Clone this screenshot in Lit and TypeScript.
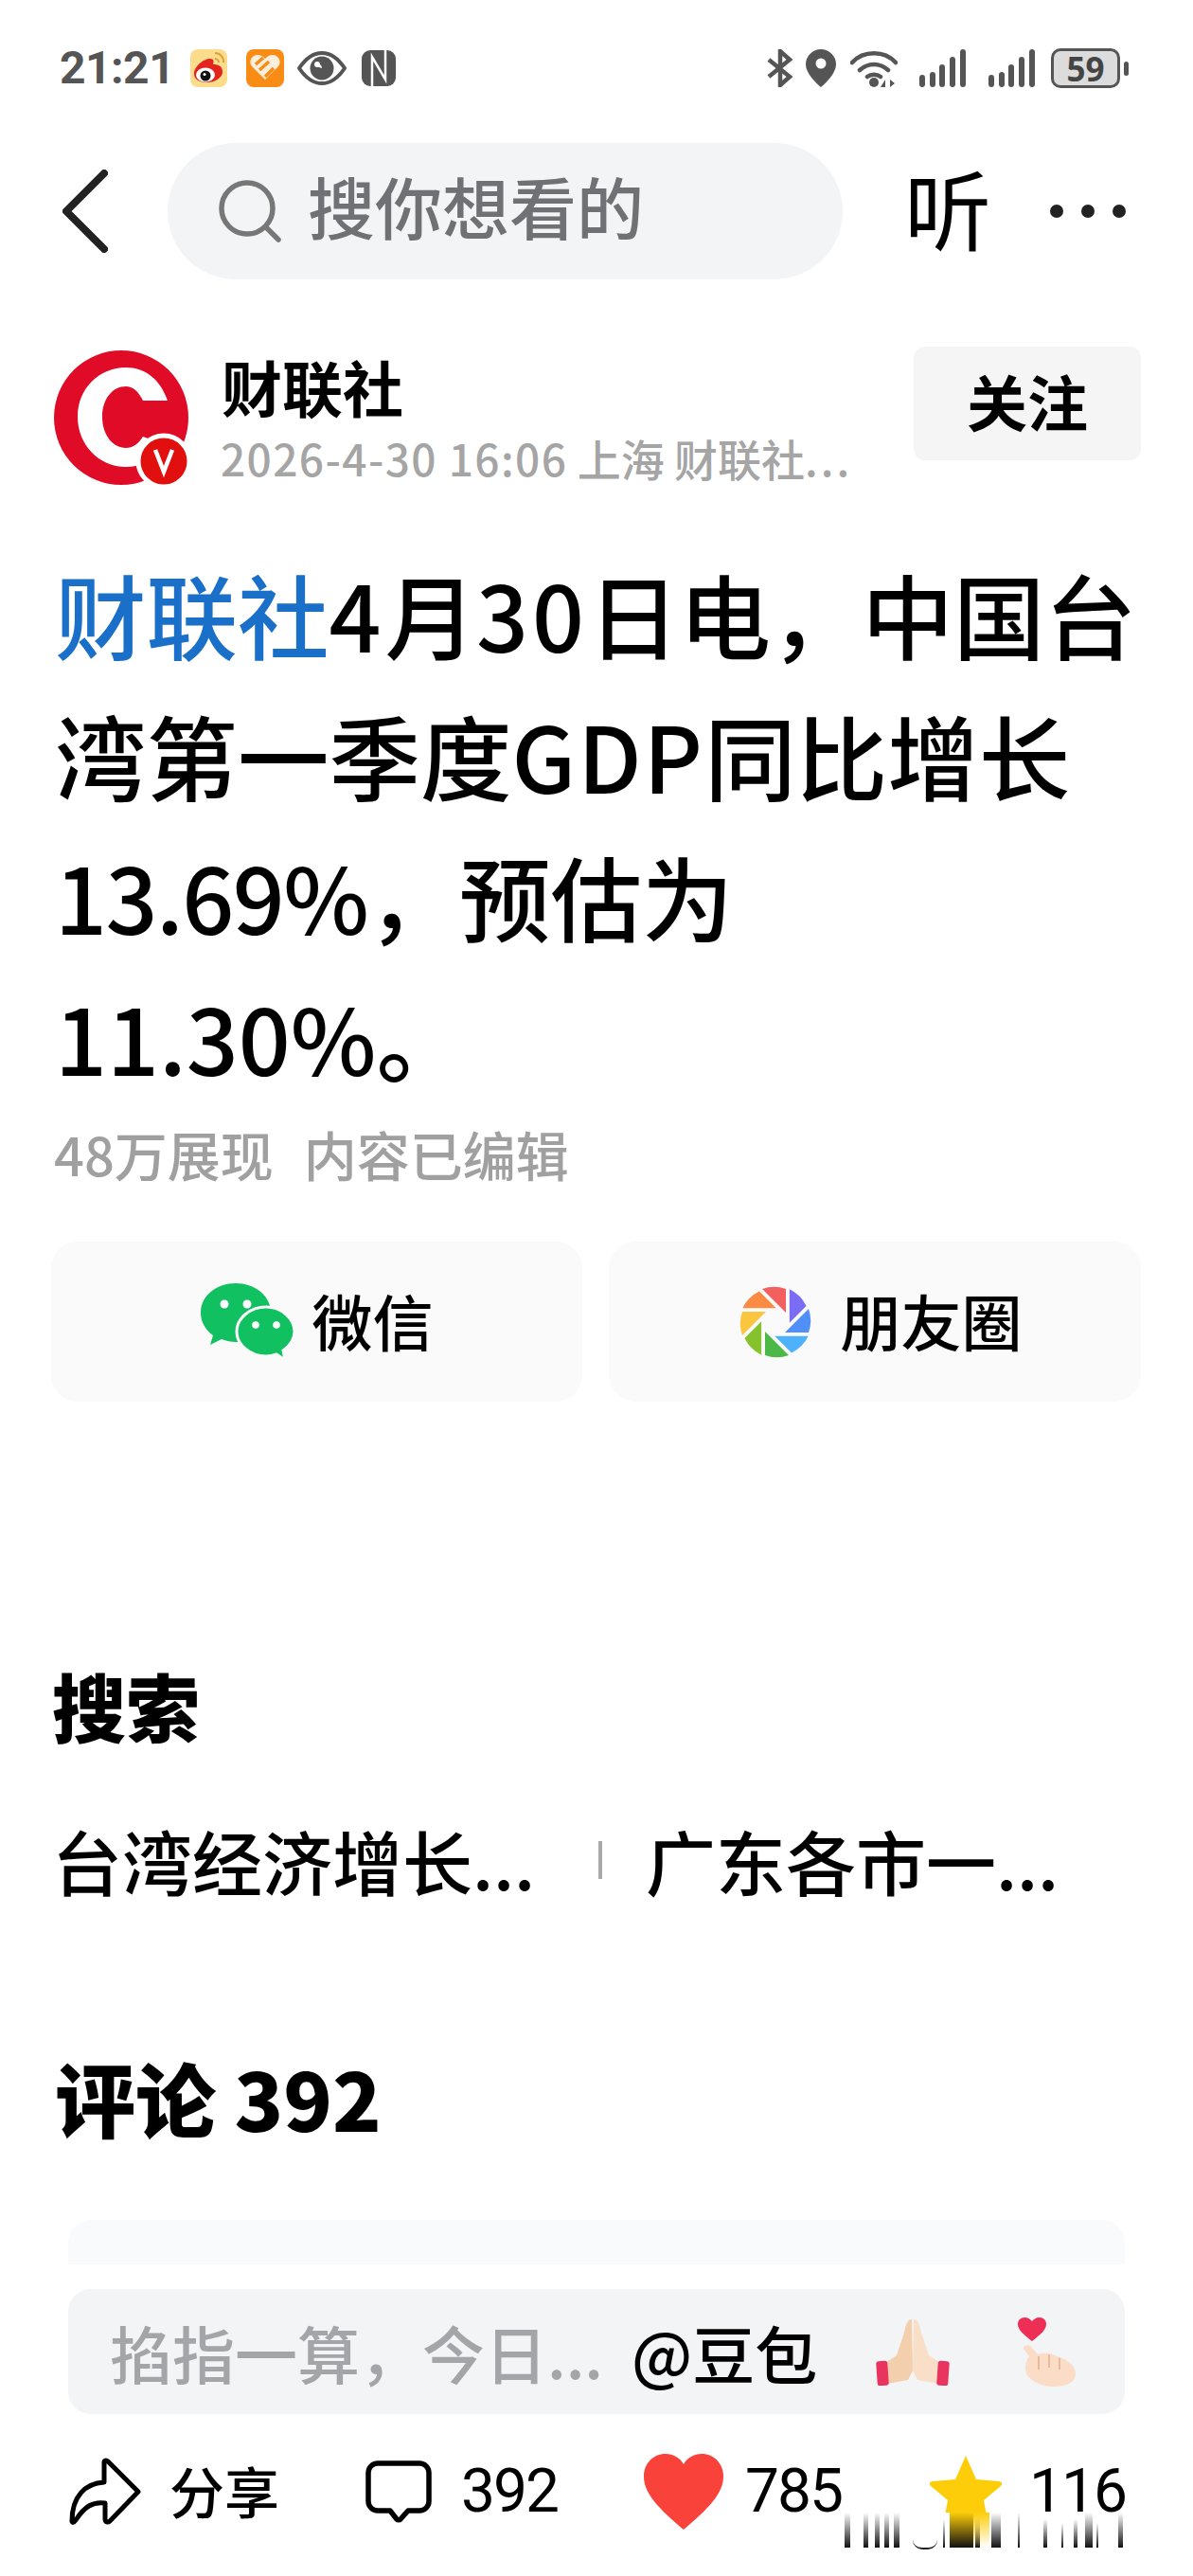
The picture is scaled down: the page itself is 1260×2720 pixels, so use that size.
import { LitElement, html, css, svg } from "lit";
import { customElement } from "lit/decorators.js";

// colours of the Moments shutter blades, clockwise from the top
const BLADES = ["#f2605f", "#7b6cf6", "#4f8ff7", "#4db2fb", "#4cb848", "#86c22e", "#fcc53f", "#fb8a43"];

// smeared strip at the bottom right: [left, width, start of the fade in %]
const BARS: [number, number, number][] = [
  [892, 6, 0], [912, 5, 0], [924, 5, 0], [934, 5, 0], [944, 6, 0],
  [996, 2, 20], [1030, 5, 10], [1047, 10, 0], [1075, 2, 0], [1102, 4, 20],
  [1121, 2, 30], [1134, 4, 20], [1146, 8, 0], [1158, 2, 30], [1181, 5, 0],
];

function blades() {
  return BLADES.map(
    (c, i) => svg`<path transform="rotate(${i * 45} 40 40)" fill=${c}
      d="M26 5A37.5 37.5 0 0 1 51 5L51 30Z"/>`
  );
}

function signal() {
  return html`<svg width="49" height="40" viewBox="0 0 49 40">
    <path d="M3 30v7M14 27v10M24 19v18M35 11v26M46 3v34" stroke="#555" stroke-width="6" stroke-linecap="round" />
  </svg>`;
}

@customElement("app-root")
export class AppRoot extends LitElement {
  static styles = css`
    :host {
      display: block;
      width: 1260px;
      height: 2720px;
      background: #fff;
      color: #000;
      font-family: "Noto Sans CJK SC", "Noto Sans", sans-serif;
      overflow: hidden;
      position: relative;
    }
    svg { display: block; flex: none; }

    .status {
      height: 52px;
      padding: 46px 68px 0 63px;
      display: flex;
      align-items: center;
      color: #555;
    }
    .time {
      font: 700 48px/52px Roboto, sans-serif;
      width: 138px;
      letter-spacing: -0.5px;
    }
    .status-left { display: flex; align-items: center; }
    .status-right { margin-left: auto; display: flex; align-items: center; }
    .battery {
      margin-left: 17px;
      width: 73px;
      height: 42px;
      box-sizing: border-box;
      border: 3.5px solid #555;
      border-radius: 10px;
      background: #dcdcdc;
      display: flex;
      align-items: center;
      justify-content: center;
      color: #444;
      font: 700 35px/1 "Open Sans", sans-serif;
    }
    .nub {
      margin-left: 4px;
      width: 5px;
      height: 15px;
      border-radius: 3px;
      background: #555;
    }

    .nav {
      margin-top: 53px;
      height: 144px;
      display: flex;
      align-items: center;
      padding: 0 70px 0 66px;
    }
    .search {
      margin-left: 63px;
      width: 713px;
      height: 144px;
      box-sizing: border-box;
      padding-left: 54px;
      border-radius: 72px;
      background: #f3f4f6;
      display: flex;
      align-items: center;
      gap: 28px;
      color: #6f7175;
      font-size: 71px;
      font-weight: 500;
      line-height: 1;
    }
    .search span { padding-bottom: 13px; }
    .listen {
      margin-left: 65px;
      padding-bottom: 10px;
      font-size: 92px;
      line-height: 1;
      font-weight: 400;
      width: 154px;
    }
    .dots { display: flex; gap: 19px; }
    .dots i { width: 14px; height: 14px; border-radius: 50%; background: #222; }

    .author {
      margin-top: 73px;
      height: 142px;
      padding: 0 55px 0 57px;
      display: flex;
    }
    .avatar { width: 146px; height: 146px; }
    .who { margin-left: 31px; width: 670px; }
    .name { font-size: 64px; font-weight: 700; line-height: 64px; margin-top: 7px; }
    .meta {
      margin-top: 18px;
      margin-left: -1px;
      color: #a5a5a5;
      font-size: 46px;
      font-weight: 500;
      line-height: 52px;
      white-space: nowrap;
    }
    .meta .date { letter-spacing: 1.4px; }
    .meta .more { letter-spacing: 3px; }
    .follow {
      margin-left: auto;
      width: 240px;
      height: 120px;
      margin-top: -2px;
      padding-bottom: 9px;
      box-sizing: border-box;
      border-radius: 12px;
      background: #f5f5f5;
      display: flex;
      align-items: center;
      justify-content: center;
      font-size: 64px;
      font-weight: 700;
    }

    .headline {
      margin: 63px 0 0 58px;
      font-size: 96.5px;
      line-height: 149px;
      font-weight: 500;
      white-space: nowrap;
    }
    .headline .source { color: #1a6fc9; }
    .headline .wide { letter-spacing: 4px; }
    .headline .gdp { letter-spacing: 2px; }
    .headline .tight { letter-spacing: -1.5px; }

    .stats {
      margin: 15px 0 0 57px;
      color: #a0a0a0;
      font-size: 56px;
      line-height: 68px;
      font-weight: 500;
      display: flex;
      gap: 32px;
    }

    .share {
      margin-top: 59px;
      padding: 0 55px 0 54px;
      display: grid;
      grid-template-columns: 561px 562px;
      gap: 28px;
    }
    .share > div {
      height: 169px;
      border-radius: 28px;
      background: #fafafa;
      display: flex;
      align-items: center;
      justify-content: center;
      font-size: 64px;
      font-weight: 500;
      gap: 18px;
    }
    .share span { padding-bottom: 6px; }
    .share > div.moments { gap: 29px; padding-left: 10px; }

    .section {
      margin: 278px 0 0 55px;
      font-size: 78px;
      line-height: 84px;
      font-weight: 900;
    }
    .related {
      margin: 77px 0 0 55px;
      display: flex;
      align-items: center;
      font-size: 74px;
      line-height: 90px;
      font-weight: 500;
      white-space: nowrap;
    }
    .related div:first-child { width: 518px; }
    .related i { width: 4px; height: 40px; background: #aaa; margin: 0 46px 0 59px; }

    .comments {
      margin: 155px 0 0 58px;
      font-size: 85px;
      line-height: 100px;
      font-weight: 900;
    }
    .peek {
      margin: 80px 72px 0;
      height: 47px;
      border-radius: 24px 24px 0 0;
      background: #f9fafb;
    }
    .input {
      margin: 26px 72px 0;
      height: 132px;
      padding-left: 44px;
      border-radius: 24px;
      background: #f3f4f6;
      display: flex;
      align-items: center;
      font-size: 66px;
      font-weight: 500;
      white-space: nowrap;
    }
    .input .hint { color: #a3a5a8; width: 551px; }
    .input .pray { margin-left: 62px; }
    .input .love { margin-left: 72px; }

    .bar {
      margin-top: 42px;
      padding-left: 73px;
      display: flex;
      align-items: center;
      height: 80px;
      font-size: 58px;
      font-weight: 500;
      line-height: 80px;
      white-space: nowrap;
    }
    .num {
      font-family: Roboto, "Noto Sans", sans-serif;
      font-weight: 400;
      font-size: 64px;
      letter-spacing: -2px;
    }
    .share-label { margin-left: 30px; width: 90px; padding-bottom: 4px; }
    .comment-icon { margin-left: 116px; }
    .comment-num { margin-left: 30px; width: 105px; }
    .heart { margin-left: 88px; }
    .like-num { margin-left: 23px; width: 105px; }
    .star { margin-left: 90px; }
    .fav-num { margin-left: 29px; }

    /* the smear lies over the bottom of the toolbar */
    .smear {
      position: absolute;
      left: 885px;
      top: 2653px;
      width: 355px;
      height: 37px;
      background: #fff;
    }
    .smear i {
      position: absolute;
      top: 0;
      bottom: 0;
      background: linear-gradient(to bottom, rgba(0, 0, 0, 0), #111);
    }
    .smear .star-fade {
      left: 143px;
      width: 17px;
      background: linear-gradient(to bottom, #fdcd0a, rgba(253, 205, 10, 0));
    }
    .smear .star-dark {
      left: 118px;
      width: 25px;
      background: linear-gradient(to bottom, #fdcd0a, #111);
    }
    .smear .curve {
      left: 79px;
      width: 26px;
      height: 8px;
      top: auto;
      bottom: -2px;
      background: none;
      border-bottom: 2px solid #222;
      border-radius: 0 0 14px 14px;
    }
  `;

  render() {
    return html`
      <div class="status">
        <div class="time">21:21</div>
        <div class="status-left">
          <svg width="40" height="42" viewBox="0 0 40 42">
            <rect x="0" y="1" width="39" height="40" rx="8" fill="#fbdc8a" />
            <path d="M4 27c0-8 10-16 17-16 4 0 4 3 3 6 6 0 10 2 10 8 0 6-8 11-16 11C10 36 4 33 4 27z" fill="#e2231e" />
            <ellipse cx="16" cy="28" rx="10" ry="7.5" fill="#fff" />
            <circle cx="16" cy="29" r="5.5" fill="#111" />
            <circle cx="15" cy="27.5" r="1.5" fill="#fff" />
            <path d="M26 5a9 9 0 0 1 9 10M26 11a4 4 0 0 1 4 4" fill="none" stroke="#e0a040" stroke-width="2" />
          </svg>
          <svg style="margin-left:19px" width="40" height="42" viewBox="0 0 40 42">
            <rect x="0" y="1" width="40" height="40" rx="8" fill="#f98c15" />
            <path d="M20 33L6 19c-4-5 0-12 6-12 4 0 6 2 8 4 2-2 4-4 8-4 6 0 10 7 6 12z" fill="#fff" opacity=".85" />
            <path d="M10 17l8-7M14 23l10-9M20 30l9-9" stroke="#f98c15" stroke-width="3.5" />
          </svg>
          <svg style="margin-left:14px" width="52" height="36" viewBox="0 0 52 36">
            <path d="M2 18C10 6 18 2 26 2s16 4 24 16c-8 12-16 16-24 16S10 30 2 18z" fill="none" stroke="#555" stroke-width="4" />
            <circle cx="26" cy="18" r="12.5" fill="#555" />
            <path d="M21 13a5 5 0 0 0 5 5 5 5 0 0 0-5-5z" fill="#fff" />
            <circle cx="21" cy="14" r="3" fill="#fff" />
          </svg>
          <svg style="margin-left:16px" width="36" height="38" viewBox="0 0 36 38">
            <rect x="0" y="0" width="36" height="38" rx="9" fill="#555" />
            <path d="M11 38V7l14 24V0" fill="none" stroke="#fff" stroke-width="2.5" />
          </svg>
        </div>
        <div class="status-right">
          <svg width="28" height="40" viewBox="0 0 28 40">
            <path d="M2 11l22 18-10 9V2l10 9L2 29" fill="none" stroke="#555" stroke-width="4.5" />
          </svg>
          <svg style="margin-left:13px" width="32" height="40" viewBox="0 0 32 40">
            <path d="M16 0a16 16 0 0 1 16 16c0 9-10 19-16 24C10 35 0 25 0 16A16 16 0 0 1 16 0z" fill="#555" />
            <circle cx="16" cy="15" r="5.5" fill="#fff" />
          </svg>
          <svg style="margin-left:15px" width="50" height="40" viewBox="0 0 50 40">
            <path d="M2 14C14 1 36 1 48 14M10 22c9-8 21-8 30 0M18 29c4-3 10-3 14 0" fill="none" stroke="#555" stroke-width="4.5" stroke-linecap="round" />
            <circle cx="25" cy="35" r="5" fill="#555" />
            <path d="M37 40v-8l-5 8zM42 32v8l5-4z" fill="#555" />
          </svg>
          <div style="margin-left:23px">${signal()}</div>
          <div style="margin-left:24px">${signal()}</div>
          <div class="battery">59</div>
          <div class="nub"></div>
        </div>
      </div>

      <div class="nav">
        <svg width="48" height="88" viewBox="0 0 48 88">
          <path d="M44 4L4 44l40 40" fill="none" stroke="#222" stroke-width="8" stroke-linecap="round" stroke-linejoin="round" />
        </svg>
        <div class="search">
          <svg width="66" height="66" viewBox="0 0 66 66">
            <circle cx="30" cy="30" r="27" fill="none" stroke="#777" stroke-width="5.5" />
            <path d="M50 50l13 13" stroke="#777" stroke-width="5.5" stroke-linecap="round" />
          </svg>
          <span>搜你想看的</span>
        </div>
        <div class="listen">听</div>
        <div class="dots"><i></i><i></i><i></i></div>
      </div>

      <div class="author">
        <svg class="avatar" viewBox="0 0 146 146">
          <circle cx="71" cy="73" r="71" fill="#e00b26" />
          <path d="M120 55C112 32 96 20 76 20C48 20 25 42 25 72s23 53 51 53c16 0 30-7 40-24l-22-8c-5 8-11 12-18 12-14 0-25-14-25-33s11-32 25-32c7 0 13 5 18 15z" fill="#fff" />
          <circle cx="116" cy="119" r="27" fill="#e20f0f" stroke="#fff" stroke-width="5" />
          <path d="M107 107l9 23 9-23" fill="none" stroke="#fff" stroke-width="4.5" />
        </svg>
        <div class="who">
          <div class="name">财联社</div>
          <div class="meta"><span class="date">2026-4-30 16:06</span> 上海 财联社<span class="more">...</span></div>
        </div>
        <div class="follow">关注</div>
      </div>

      <div class="headline">
        <span class="source">财联社</span><span class="wide">4</span>月<span class="wide">30</span>日电，中国台<br />湾第一季度<span class="gdp">GDP</span>同比增长<br /><span class="tight">13.69%</span>，预估为<br />11.30%。
      </div>
      <div class="stats"><div>48万展现</div><div>内容已编辑</div></div>

      <div class="share">
        <div>
          <svg width="100" height="84" viewBox="0 0 100 84">
            <path d="M37 1C17 1 0 14 0 32c0 10 5 18 13 24l-3 10 12-6c5 2 10 3 15 3 20 0 37-13 37-31S57 1 37 1z" fill="#11c060" />
            <circle cx="25" cy="23" r="4.5" fill="#fff" />
            <circle cx="49" cy="23" r="4.5" fill="#fff" />
            <path d="M69 26c-17 0-31 12-31 26s14 26 31 26c4 0 8-1 11-2l9 6-2-10c7-5 12-12 12-20 0-14-14-26-30-26z" fill="#11c060" stroke="#fafafa" stroke-width="3" />
            <circle cx="58" cy="45" r="3.8" fill="#fff" />
            <circle cx="80" cy="45" r="3.8" fill="#fff" />
          </svg>
          <span>微信</span>
        </div>
        <div class="moments">
          <svg width="80" height="80" viewBox="0 0 80 80">${blades()}</svg>
          <span>朋友圈</span>
        </div>
      </div>

      <div class="section">搜索</div>
      <div class="related">
        <div>台湾经济增长...</div>
        <i></i>
        <div>广东各市一...</div>
      </div>

      <div class="comments">评论 392</div>
      <div class="peek"></div>
      <div class="input">
        <div class="hint">掐指一算，今日...</div>
        <div>@豆包</div>
        <svg class="pray" width="78" height="72" viewBox="0 0 78 72">
          <path d="M38 2c-4 0-6 4-8 14L22 40 10 48l2 22 22-4 5-10z" fill="#f3cfae" />
          <path d="M40 2c4 0 6 4 8 14l8 24 12 8-2 22-22-4-5-10z" fill="#f9dfc8" />
          <rect x="1" y="46" width="12" height="26" rx="3" fill="#e8345f" transform="rotate(-4 7 59)" />
          <rect x="65" y="46" width="12" height="26" rx="3" fill="#e8345f" transform="rotate(4 71 59)" />
        </svg>
        <svg class="love" width="62" height="74" viewBox="0 0 62 74">
          <path d="M15 26C6 19 0 14 0 8c0-4 3-7 7-7 4 0 6 2 8 4 2-2 4-4 8-4 4 0 7 3 7 7 0 6-6 11-15 18z" fill="#ee2f55" />
          <path d="M6 34c0-4 5-5 8-2l7 8c6-2 14-2 20 2 10 2 20 10 20 18 0 9-9 14-22 14C22 74 8 66 8 54c0-5 2-9 4-12z" fill="#fbdcc6" />
          <path d="M22 42v14M33 40v14M44 44v12" stroke="#e8b99a" stroke-width="2" fill="none" />
        </svg>
      </div>

      <div class="bar">
        <svg width="76" height="72" viewBox="0 0 76 72">
          <path d="M3 67c0-26 14-40 34-41V5c0-2 2-3 4-1l32 32-30 31c-2 2-5 1-5-2V48c-13-2-22 4-31 18-2 3-4 3-4 1z" fill="none" stroke="#000" stroke-width="5" stroke-linejoin="round" />
        </svg>
        <div class="share-label">分享</div>
        <svg class="comment-icon" width="72" height="66" viewBox="0 0 72 66">
          <path d="M14 3h44a10 10 0 0 1 10 10v30a10 10 0 0 1-10 10H46l-8 9c-1 1-3 1-4 0l-7-9H14A10 10 0 0 1 4 43V13A10 10 0 0 1 14 3z" fill="none" stroke="#000" stroke-width="5.5" stroke-linejoin="round" />
        </svg>
        <div class="num comment-num">392</div>
        <svg class="heart" width="84" height="80" viewBox="0 0 84 80">
          <path d="M42 80C16 58 0 42 0 24 0 10 10 0 23 0c8 0 15 4 19 11C46 4 53 0 61 0c13 0 23 10 23 24 0 18-16 34-42 56z" fill="#f9423a" />
        </svg>
        <div class="num like-num">785</div>
        <svg class="star" width="76" height="80" viewBox="0 0 76 80">
          <path d="M38 2l11 25 24 2c3 0 4 3 2 5L57 49l5 27c0 3-3 4-5 3L38 66 19 79c-2 1-5 0-5-3l5-27L1 34c-2-2-1-5 2-5l24-2z" fill="#fdcd0a" />
        </svg>
        <div class="num fav-num">116</div>
      </div>

      <div class="smear">
        ${BARS.map(
          ([x, w, from]) => html`<i style="left:${x - 885}px;width:${w}px;top:${from}%"></i>`
        )}
        <i class="star-dark"></i>
        <i class="star-fade"></i>
        <i class="curve"></i>
      </div>
    `;
  }
}
